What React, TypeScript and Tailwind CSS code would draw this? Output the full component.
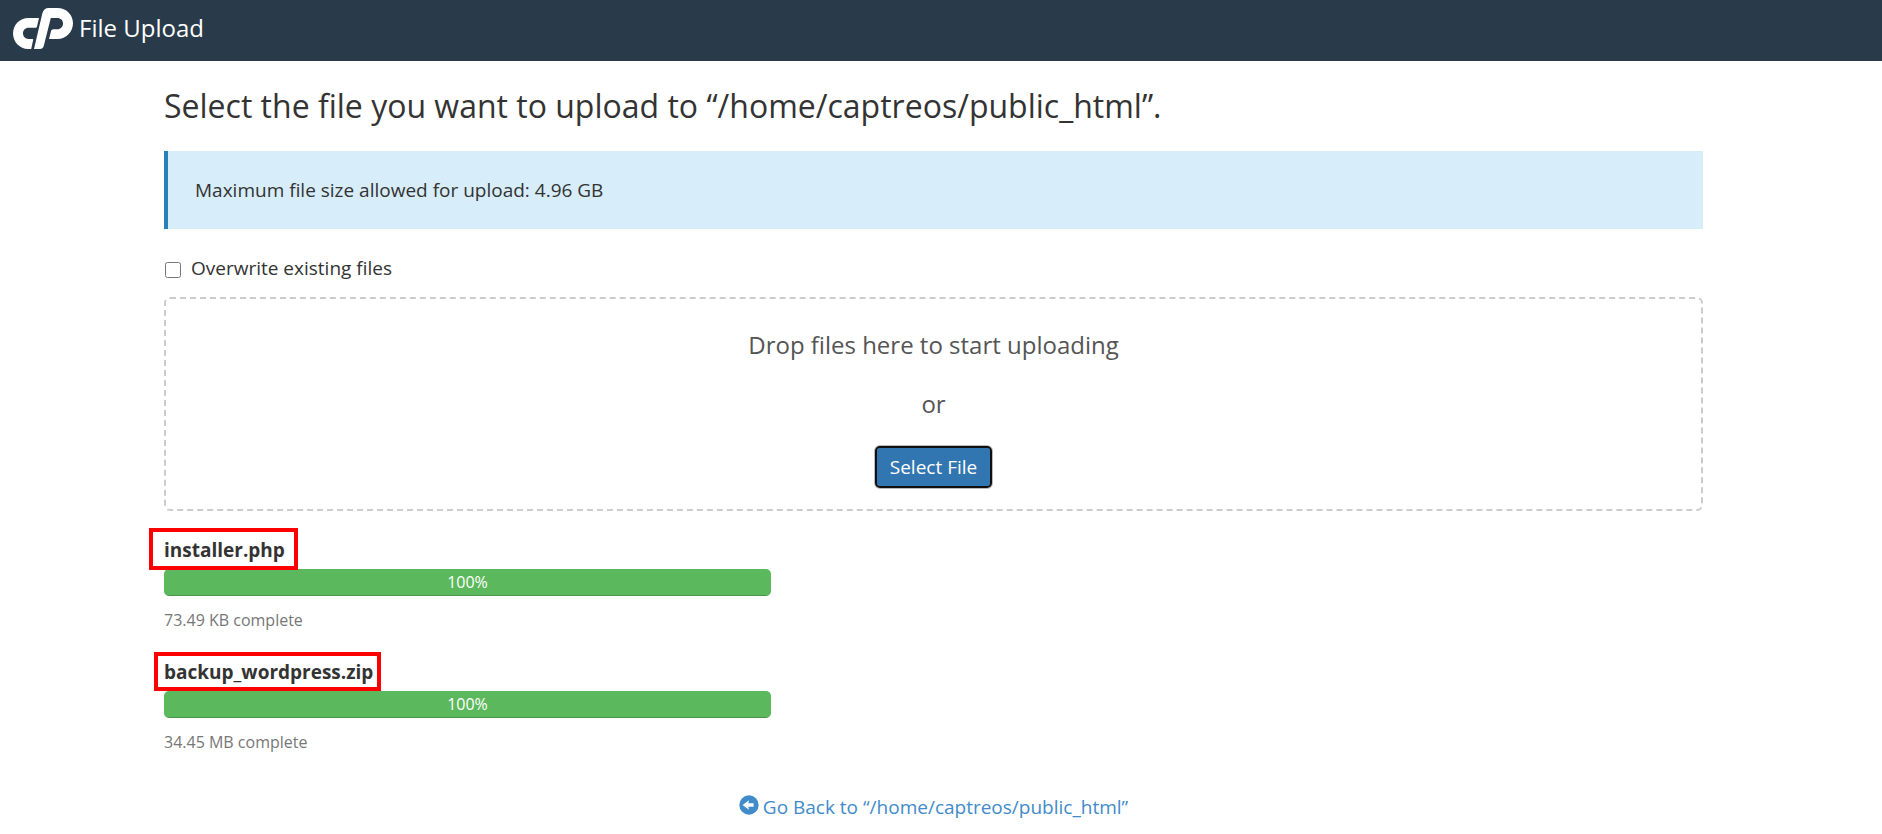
const DIRECTORY = "/home/captreos/public_html";

type Upload = {
  name: string;
  percent: number;
  status: string;
  frame: string;
};

const uploads: Upload[] = [
  { name: "installer.php", percent: 100, status: "73.49 KB complete", frame: "-top-[8px] -bottom-[6px] -left-[15px] -right-[13px]" },
  { name: "backup_wordpress.zip", percent: 100, status: "34.45 MB complete", frame: "-top-[6px] -bottom-[5px] -left-[10px] -right-[8px]" },
];

function CpanelLogo() {
  return (
    <svg viewBox="0 0 60 42" className="h-[42px] w-[60px] shrink-0" role="img" aria-label="cPanel" fill="#fff">
      <path d="M26 10H15.5C6.5 10 0 17 0 25.5S7 41 15 41H18.2L20.2 31.8C20.3 31.3 20 31 19.5 31H15.5C12.3 31 10 28.6 10 25.3S12.3 19.7 15.5 19.7H22.3C23.3 19.7 23.8 19.2 24 18.4Z" />
      <path d="M21 41 29.3 5.6C30.2 2 32.2 0 35.8 0H44.5C53.4 0 60 6.8 60 15.3S53.2 31 44.5 31H36L38 23.2C38.3 22 39.3 21.3 40.5 21.3H44.3C47.7 21.3 50 18.7 50 15.5S47.6 10 44.3 10H37.8L30.8 37.8C30.2 40 28.9 41 26.8 41Z" />
    </svg>
  );
}

function ArrowCircleLeft() {
  return (
    <svg viewBox="0 0 20 20" className="mt-px mr-1 size-5 shrink-0 self-start" aria-hidden="true">
      <circle cx="10" cy="10" r="9.7" fill="#428bca" />
      <path d="M3.6 10 10 5.2 9.3 8.2H14.6V11.8H9.3L10 14.8Z" fill="#fff" />
    </svg>
  );
}

function UploadRow({ name, percent, status, frame }: Upload) {
  return (
    <li className="h-[122px]">
      <div className="h-[33px]">
        <span className="relative inline-block text-[19px] leading-7 font-bold text-[#333]">
          {name}
          <span className={`absolute border-4 border-[#ff0000] ${frame}`} aria-hidden="true" />
        </span>
      </div>
      <div
        role="progressbar"
        aria-label={name}
        aria-valuenow={percent}
        aria-valuemin={0}
        aria-valuemax={100}
        className="h-[27px] overflow-hidden rounded-[5px] bg-[#f5f5f5]"
      >
        <div
          className="h-full bg-[#5cb85c] text-center text-base leading-[27px] text-white shadow-[inset_0_-1px_0_rgba(0,0,0,0.2)]"
          style={{ width: `${percent}%` }}
        >
          {percent}%
        </div>
      </div>
      <p className="pt-3 text-base leading-6 text-[#777]">{status}</p>
    </li>
  );
}

export default function App() {
  return (
    <div className="bg-white font-['Open_Sans',sans-serif] text-[19px] leading-[27px] text-[#333]">
      <header className="flex h-[61px] items-center gap-[6px] bg-[#293a4a] pb-1 pl-[13px] text-white">
        <CpanelLogo />
        <span className="pb-0.5 text-2xl">File Upload</span>
      </header>

      <div className="pr-[15px]">
        <main className="mx-auto max-w-[1539px]">
          <h1 className="pt-[22px] pb-[22px] text-[32px] leading-[46px]">
            Select the file you want to upload to “{DIRECTORY}”.
          </h1>

          <div className="border-l-4 border-[#2780b9] bg-[#d7edf9] px-[27px] py-[25px] leading-7">
            Maximum file size allowed for upload: 4.96 GB
          </div>

          <label className="mt-[25px] flex w-fit items-center gap-[9px] leading-7">
            <input type="checkbox" className="mt-[3px] mr-px ml-px size-4" />
            Overwrite existing files
          </label>

          <section className="mt-[15px] flex h-[214px] flex-col items-center rounded-[6px] border-2 border-dashed border-[#ccc] pt-[29px] text-2xl leading-[34px] text-[#555]">
            <p>Drop files here to start uploading</p>
            <p className="mt-[25px]">or</p>
            <button
              type="button"
              className="mt-[27px] h-[38px] rounded-[3px] bg-[#3276b1] px-[13px] pt-px text-[19px] leading-[27px] text-white shadow-[0_0_0_3px_#bbb] outline-2 outline-[#101010]"
            >
              Select File
            </button>
          </section>

          <ul className="w-[607px] max-w-full pt-[25px]">
            {uploads.map((upload) => (
              <UploadRow key={upload.name} {...upload} />
            ))}
          </ul>

          <div className="flex justify-center pt-[14px] pb-[13px]">
            <a href="#back" className="flex items-center text-[#428bca]">
              <ArrowCircleLeft />
              Go Back to “{DIRECTORY}”
            </a>
          </div>
        </main>
      </div>
    </div>
  );
}
